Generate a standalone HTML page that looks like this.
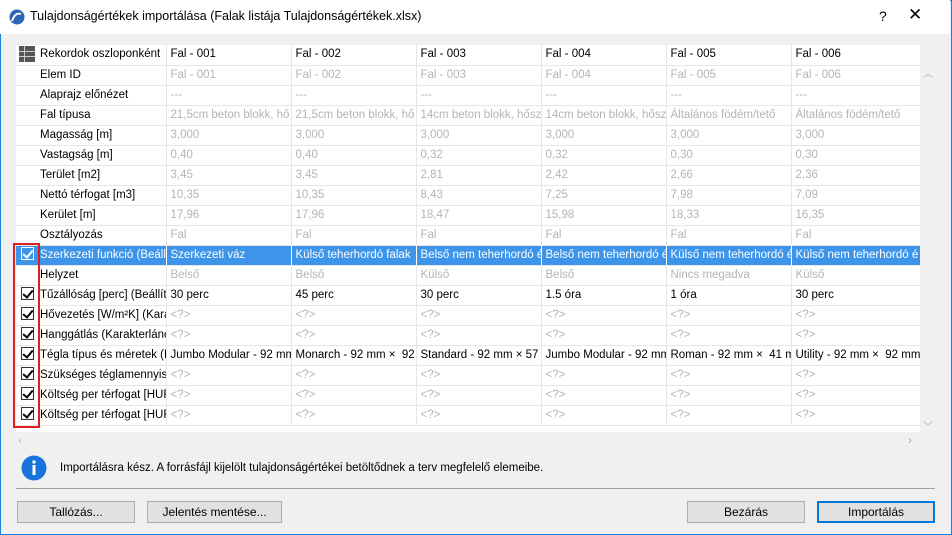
<!DOCTYPE html>
<html><head><meta charset="utf-8"><style>
*{box-sizing:border-box;margin:0;padding:0}
body{width:952px;height:535px;overflow:hidden;font-family:"Liberation Sans",sans-serif;font-size:12px;color:#000;background:#f0f0f0;position:relative}
.win{position:absolute;left:0;top:0;width:952px;height:535px;border:1px solid #1e7fd6;}
.title{position:absolute;left:0;top:0;width:950px;height:34px;background:#fff}
.title .t{position:absolute;left:30px;top:9px;font-size:12.5px}
.tbl{position:absolute;left:16px;top:45px;width:904px;height:387px;background:#fff;overflow:hidden}
table{border-collapse:collapse;table-layout:fixed;width:904px}
td{height:20px;border-right:1px solid #e6e6e6;border-bottom:1px solid #e6e6e6;white-space:nowrap;overflow:hidden;padding-left:4px;font-size:11.5px;line-height:19px}
td.c{padding:0;border-right:none;background:#fff;text-align:center}
td.l{padding-left:2px;border-right:1px solid #e6e6e6}
.g{color:#b4b4b4}
tr.sel td{background:#3d95ea;color:#fff;border-right-color:#fff}
tr.sel td.c{background:#3d95ea}
.cb{display:inline-block;width:13px;height:13px;border:1px solid #333;background:#fff;vertical-align:middle;position:relative;margin-top:-2px}
.cb:after{content:"";position:absolute;left:3px;top:0px;width:4px;height:8px;border:solid #000;border-width:0 2px 2px 0;transform:rotate(40deg)}
tr.sel .cb{border-color:#fff;background:#3d95ea}
tr.sel .cb:after{border-color:#fff}
.red{position:absolute;left:13px;top:243px;width:27px;height:185px;border:2px solid #e02020}
.btn{position:absolute;top:501px;height:22px;background:#e1e1e1;border:1px solid #adadad;text-align:center;line-height:20px;font-size:12px}
</style></head><body>
<div class="win"></div>
<div class="title">
<svg style="position:absolute;left:9px;top:9px" width="16" height="16" viewBox="0 0 16 16"><circle cx="8" cy="8" r="7.5" fill="#2d64b5"/><path d="M3 12 Q6 3 12 5" stroke="#fff" stroke-width="2" fill="none"/></svg>
<div class="t">Tulajdonságértékek importálása (Falak listája Tulajdonságértékek.xlsx)</div>
<div style="position:absolute;left:879px;top:8px;font-size:14px">?</div>
<div style="position:absolute;left:908px;top:5px;font-size:17px">✕</div>
</div>
<div class="tbl"><table>
<colgroup><col style="width:22px"><col style="width:128px"><col style="width:125px"><col style="width:125px"><col style="width:125px"><col style="width:125px"><col style="width:125px"><col style="width:129px"></colgroup>
<tr><td class="c"><svg width="16" height="16" viewBox="0 0 16 16" style="vertical-align:middle"><rect x="0.5" y="0.5" width="15" height="15" fill="#555" stroke="#555"/><path d="M0 5.5H16M0 10.5H16M5.5 0V16" stroke="#ccc"/></svg></td><td class="l">Rekordok oszloponként</td><td>Fal - 001</td><td>Fal - 002</td><td>Fal - 003</td><td>Fal - 004</td><td>Fal - 005</td><td>Fal - 006</td></tr>
<tr><td class="c"></td><td class="l">Elem ID</td><td class="g">Fal - 001</td><td class="g">Fal - 002</td><td class="g">Fal - 003</td><td class="g">Fal - 004</td><td class="g">Fal - 005</td><td class="g">Fal - 006</td></tr>
<tr><td class="c"></td><td class="l">Alaprajz előnézet</td><td class="g">---</td><td class="g">---</td><td class="g">---</td><td class="g">---</td><td class="g">---</td><td class="g">---</td></tr>
<tr><td class="c"></td><td class="l">Fal típusa</td><td class="g">21,5cm beton blokk, hő</td><td class="g">21,5cm beton blokk, hő</td><td class="g">14cm beton blokk, hősz</td><td class="g">14cm beton blokk, hősz</td><td class="g">Általános födém/tető</td><td class="g">Általános födém/tető</td></tr>
<tr><td class="c"></td><td class="l">Magasság [m]</td><td class="g">3,000</td><td class="g">3,000</td><td class="g">3,000</td><td class="g">3,000</td><td class="g">3,000</td><td class="g">3,000</td></tr>
<tr><td class="c"></td><td class="l">Vastagság [m]</td><td class="g">0,40</td><td class="g">0,40</td><td class="g">0,32</td><td class="g">0,32</td><td class="g">0,30</td><td class="g">0,30</td></tr>
<tr><td class="c"></td><td class="l">Terület [m2]</td><td class="g">3,45</td><td class="g">3,45</td><td class="g">2,81</td><td class="g">2,42</td><td class="g">2,66</td><td class="g">2,36</td></tr>
<tr><td class="c"></td><td class="l">Nettó térfogat [m3]</td><td class="g">10,35</td><td class="g">10,35</td><td class="g">8,43</td><td class="g">7,25</td><td class="g">7,98</td><td class="g">7,09</td></tr>
<tr><td class="c"></td><td class="l">Kerület [m]</td><td class="g">17,96</td><td class="g">17,96</td><td class="g">18,47</td><td class="g">15,98</td><td class="g">18,33</td><td class="g">16,35</td></tr>
<tr><td class="c"></td><td class="l">Osztályozás</td><td class="g">Fal</td><td class="g">Fal</td><td class="g">Fal</td><td class="g">Fal</td><td class="g">Fal</td><td class="g">Fal</td></tr>
<tr class="sel"><td class="c"><span class="cb"></span></td><td class="l">Szerkezeti funkció (Beállítás)</td><td>Szerkezeti váz</td><td>Külső teherhordó falak</td><td>Belső nem teherhordó é</td><td>Belső nem teherhordó é</td><td>Külső nem teherhordó é</td><td>Külső nem teherhordó é</td></tr>
<tr><td class="c"></td><td class="l">Helyzet</td><td class="g">Belső</td><td class="g">Belső</td><td class="g">Külső</td><td class="g">Belső</td><td class="g">Nincs megadva</td><td class="g">Külső</td></tr>
<tr><td class="c"><span class="cb"></span></td><td class="l">Tűzállóság [perc] (Beállítás)</td><td>30 perc</td><td>45 perc</td><td>30 perc</td><td>1.5 óra</td><td>1 óra</td><td>30 perc</td></tr>
<tr><td class="c"><span class="cb"></span></td><td class="l">Hővezetés [W/m²K] (Karakter)</td><td class="g">&lt;?&gt;</td><td class="g">&lt;?&gt;</td><td class="g">&lt;?&gt;</td><td class="g">&lt;?&gt;</td><td class="g">&lt;?&gt;</td><td class="g">&lt;?&gt;</td></tr>
<tr><td class="c"><span class="cb"></span></td><td class="l">Hanggátlás (Karakterlánc)</td><td class="g">&lt;?&gt;</td><td class="g">&lt;?&gt;</td><td class="g">&lt;?&gt;</td><td class="g">&lt;?&gt;</td><td class="g">&lt;?&gt;</td><td class="g">&lt;?&gt;</td></tr>
<tr><td class="c"><span class="cb"></span></td><td class="l">Tégla típus és méretek (Beállítás)</td><td>Jumbo Modular - 92 mm</td><td>Monarch - 92 mm × &nbsp;92</td><td>Standard - 92 mm × 57 mm</td><td>Jumbo Modular - 92 mm</td><td>Roman - 92 mm × &nbsp;41 mm</td><td>Utility - 92 mm × &nbsp;92 mm</td></tr>
<tr><td class="c"><span class="cb"></span></td><td class="l">Szükséges téglamennyiség</td><td class="g">&lt;?&gt;</td><td class="g">&lt;?&gt;</td><td class="g">&lt;?&gt;</td><td class="g">&lt;?&gt;</td><td class="g">&lt;?&gt;</td><td class="g">&lt;?&gt;</td></tr>
<tr><td class="c"><span class="cb"></span></td><td class="l">Költség per térfogat [HUF]</td><td class="g">&lt;?&gt;</td><td class="g">&lt;?&gt;</td><td class="g">&lt;?&gt;</td><td class="g">&lt;?&gt;</td><td class="g">&lt;?&gt;</td><td class="g">&lt;?&gt;</td></tr>
<tr><td class="c"><span class="cb"></span></td><td class="l">Költség per térfogat [HUF]</td><td class="g">&lt;?&gt;</td><td class="g">&lt;?&gt;</td><td class="g">&lt;?&gt;</td><td class="g">&lt;?&gt;</td><td class="g">&lt;?&gt;</td><td class="g">&lt;?&gt;</td></tr>
</table></div>
<div class="red"></div>
<div style="position:absolute;left:923px;top:65px;color:#aaa;font-size:10px">︿</div>
<div style="position:absolute;left:923px;top:418px;color:#aaa;font-size:10px">﹀</div>
<div style="position:absolute;left:18px;top:433px;color:#bbb;font-size:12px">‹</div>
<div style="position:absolute;left:908px;top:433px;color:#aaa;font-size:12px">›</div>
<svg style="position:absolute;left:21px;top:455px" width="26" height="26"><circle cx="13" cy="13" r="12.5" fill="#1a73d8"/><rect x="11.5" y="10" width="3" height="10" fill="#fff"/><rect x="11.5" y="5.5" width="3" height="3" fill="#fff"/></svg>
<div style="position:absolute;left:60px;top:462px;font-size:11.5px">Importálásra kész. A forrásfájl kijelölt tulajdonságértékei betöltődnek a terv megfelelő elemeibe.</div>
<div style="position:absolute;left:16px;top:488px;width:919px;height:1px;background:#a0a0a0"></div>
<div class="btn" style="left:17px;width:118px">Tallózás...</div>
<div class="btn" style="left:147px;width:135px">Jelentés mentése...</div>
<div class="btn" style="left:687px;width:118px">Bezárás</div>
<div class="btn" style="left:817px;width:118px;border:2px solid #0078d7;line-height:18px">Importálás</div>
</body></html>
